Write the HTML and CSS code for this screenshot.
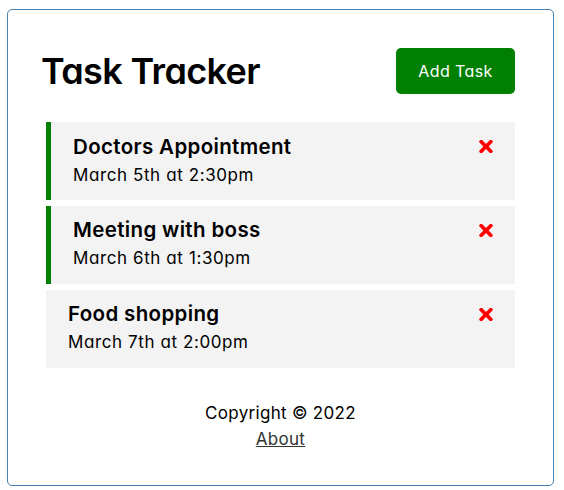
FILE: index.html
```html
<!DOCTYPE html>
<html lang="en">
<head>
<meta charset="utf-8">
<title>Task Tracker</title>
<link rel="stylesheet" href="styles.css">
</head>
<body>
<div class="container">
  <header class="header">
    <h1 class="title">Task Tracker</h1>
    <button class="btn">Add Task</button>
  </header>
  <div class="tasks">
    <div class="task reminder">
      <h3 class="task-title">Doctors Appointment
        <svg class="del" viewBox="0 89 352 334" aria-hidden="true"><path d="M242.72 256l100.07-100.07c12.28-12.28 12.28-32.19 0-44.48l-22.24-22.24c-12.28-12.280-32.19-12.280-44.48 0L176 189.28 75.930 89.210c-12.28-12.28-32.19-12.28-44.48 0L9.21 111.45c-12.28 12.28-12.28 32.19 0 44.48L109.28 256 9.21 356.07c-12.28 12.28-12.28 32.19 0 44.48l22.24 22.24c12.28 12.28 32.2 12.28 44.48 0L176 322.72l100.07 100.07c12.28 12.28 32.2 12.28 44.48 0l22.24-22.24c12.28-12.28 12.28-32.19 0-44.48L242.72 256z"/></svg>
      </h3>
      <p class="task-day">March 5th at 2:30pm</p>
    </div>
    <div class="task reminder">
      <h3 class="task-title">Meeting with boss
        <svg class="del" viewBox="0 89 352 334" aria-hidden="true"><path d="M242.72 256l100.07-100.07c12.28-12.28 12.28-32.19 0-44.48l-22.24-22.24c-12.28-12.280-32.19-12.280-44.48 0L176 189.28 75.930 89.210c-12.28-12.28-32.19-12.28-44.48 0L9.21 111.45c-12.28 12.28-12.28 32.19 0 44.48L109.28 256 9.21 356.07c-12.28 12.28-12.28 32.19 0 44.48l22.24 22.24c12.28 12.28 32.2 12.28 44.48 0L176 322.72l100.07 100.07c12.28 12.28 32.2 12.28 44.48 0l22.24-22.240c12.28-12.28 12.28-32.19 0-44.48L242.72 256z"/></svg>
      </h3>
      <p class="task-day">March 6th at 1:30pm</p>
    </div>
    <div class="task">
      <h3 class="task-title">Food shopping
        <svg class="del" viewBox="0 89 352 334" aria-hidden="true"><path d="M242.72 256l100.07-100.07c12.28-12.28 12.28-32.19 0-44.48l-22.24-22.24c-12.28-12.280-32.19-12.280-44.48 0L176 189.28 75.930 89.210c-12.28-12.28-32.19-12.28-44.48 0L9.21 111.45c-12.28 12.28-12.28 32.19 0 44.48L109.28 256 9.21 356.07c-12.28 12.28-12.28 32.19 0 44.48l22.24 22.24c12.28 12.28 32.2 12.28 44.48 0L176 322.72l100.07 100.07c12.28 12.28 32.2 12.28 44.48 0l22.24-22.24c12.28-12.28 12.28-32.19 0-44.48L242.72 256z"/></svg>
      </h3>
      <p class="task-day">March 7th at 2:00pm</p>
    </div>
  </div>
  <footer class="footer">
    <p class="copy">Copyright &copy; 2022</p>
    <a class="about" href="#">About</a>
  </footer>
</div>
</body>
</html>
```

FILE: styles.css
```css
* {
  box-sizing: border-box;
}

body {
  margin: 0;
  background: #fff;
  font-family: "Inter", "Noto Sans", sans-serif;
  font-feature-settings: "cv11" 1;
  color: #000;
}

.container {
  width: 547px;
  margin: 9px 0 0 7px;
  border: 1px solid #4682b4;
  border-radius: 5px;
  padding: 33px;
}

.header {
  display: flex;
  justify-content: space-between;
  align-items: center;
  margin-bottom: 23px;
}

.title {
  margin: 0;
  font-size: 36px;
  font-weight: 600;
  line-height: 44px;
  letter-spacing: -0.65px;
}

.btn {
  margin: 5px;
  border: none;
  border-radius: 5px;
  background: #008000;
  color: #fff;
  padding: 10px 0;
  width: 119px;
  height: 46px;
  font-family: inherit;
  font-feature-settings: "cv11" 1;
  font-size: 16px;
  line-height: 26px;
  letter-spacing: 0.4px;
  cursor: pointer;
}

.tasks {
  display: flex;
  flex-direction: column;
  gap: 5.6px;
}

.task {
  margin: 0 5px;
  background: #f3f3f3;
  padding: 9.5px 22px 12.8px;
  cursor: pointer;
}

.task.reminder {
  border-left: 5px solid #008000;
}

.task-title {
  display: flex;
  justify-content: space-between;
  align-items: center;
  margin: 0;
  font-size: 20.5px;
  font-weight: 600;
  line-height: 30px;
  letter-spacing: 0.35px;
}

.del {
  width: 14px;
  height: 13px;
  fill: #ff0000;
  flex: none;
}

.task-day {
  margin: 0;
  font-size: 17px;
  line-height: 26px;
  letter-spacing: 0.6px;
}

.footer {
  margin-top: 31.5px;
  text-align: center;
  font-size: 17px;
  line-height: 26px;
  letter-spacing: 0.3px;
}

.copy {
  margin: 0;
}

.about {
  color: #333;
}
```
